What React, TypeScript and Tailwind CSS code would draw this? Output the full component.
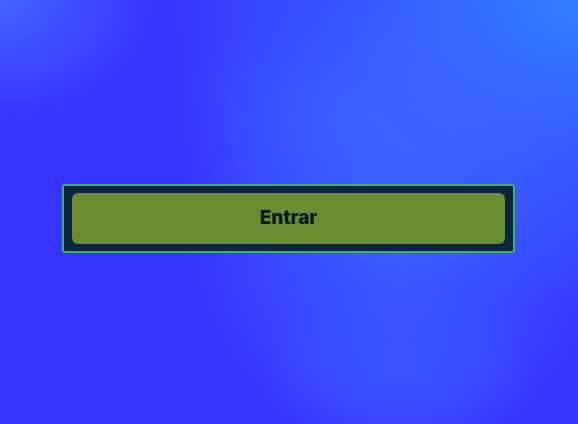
import React from 'react';

export default function App() {
  return (
    <div className="relative h-screen w-full overflow-hidden bg-[#3834ff]">
      {/* soft background glow */}
      <div className="absolute inset-0 bg-[radial-gradient(ellipse_420px_300px_at_100%_0%,#327fff_0%,rgba(50,127,255,0.6)_40%,rgba(50,127,255,0)_100%)]" />
      <div className="absolute inset-0 bg-[radial-gradient(ellipse_220px_230px_at_400px_230px,rgba(58,105,255,0.85)_0%,rgba(58,105,255,0)_100%)]" />
      <div className="absolute inset-0 bg-[radial-gradient(ellipse_140px_90px_at_400px_370px,rgba(60,95,255,0.6)_0%,rgba(60,95,255,0)_100%)]" />
      <div className="absolute inset-0 bg-[radial-gradient(ellipse_160px_120px_at_0%_0%,rgba(70,110,255,0.8)_0%,rgba(70,110,255,0)_100%)]" />
      <div className="absolute inset-0 bg-[radial-gradient(ellipse_200px_120px_at_360px_120px,rgba(60,100,255,0.6)_0%,rgba(60,100,255,0)_100%)]" />

      <div className="relative flex pt-[184px] pl-[62px]">
        <div className="w-[453px] h-[69px] rounded-[3px] border-2 border-[#38b468] bg-[#0c2641] px-[8px] py-[7px]">
          <button className="flex h-[51px] w-full items-center justify-center rounded-[6px] bg-[#6a8c32] text-[19px] font-extrabold text-[#071a1c] font-['Inter',sans-serif]">
            Entrar
          </button>
        </div>
      </div>
    </div>
  );
}
